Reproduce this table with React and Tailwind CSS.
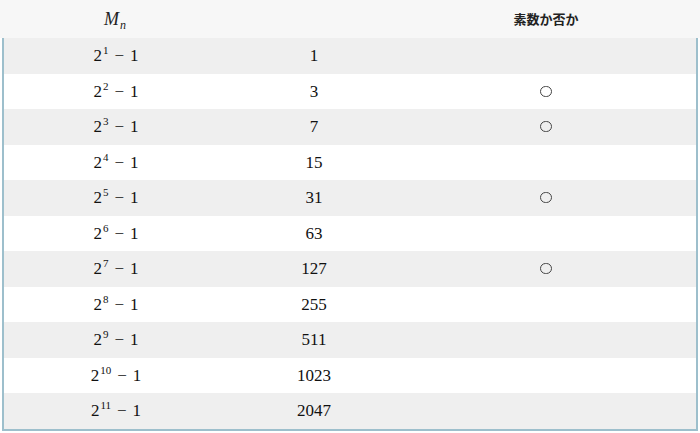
import React from 'react';

const rows = [
  { exp: '1', value: '1', prime: false },
  { exp: '2', value: '3', prime: true },
  { exp: '3', value: '7', prime: true },
  { exp: '4', value: '15', prime: false },
  { exp: '5', value: '31', prime: true },
  { exp: '6', value: '63', prime: false },
  { exp: '7', value: '127', prime: true },
  { exp: '8', value: '255', prime: false },
  { exp: '9', value: '511', prime: false },
  { exp: '10', value: '1023', prime: false },
  { exp: '11', value: '2047', prime: false },
];

const mathFont = { fontFamily: '"Liberation Serif", "DejaVu Serif", serif' };

export default function App() {
  return (
    <div className="w-[700px] h-[433px] bg-white overflow-hidden">
      {/* Header */}
      <div className="flex h-[38px] items-center bg-[#f7f7f7] px-[3px]">
        <div className="w-[224px] text-center text-[18px] text-[#222] italic" style={mathFont}>
          M<span className="text-[12px] relative top-[4px] ml-[1px]">n</span>
        </div>
        <div className="w-[172px]" />
        <div className="flex-1 pr-[4px] text-center text-[13px] font-bold text-[#222] font-['Noto_Sans_CJK_JP',sans-serif]">
          素数か否か
        </div>
      </div>

      {/* Body */}
      <div className="mx-[2px] border-x-[2px] border-b-[2px] border-[#9dbfcc]">
        {rows.map((row, i) => (
          <div
            key={row.exp}
            className={`flex h-[35.5px] items-center ${i % 2 === 0 ? 'bg-[#efefef]' : 'bg-white'}`}
          >
            <div className="w-[224px] text-center text-[17px] text-[#111]" style={mathFont}>
              2<span className="text-[11px] relative -top-[7px] ml-[1px]">{row.exp}</span>
              <span className="mx-[6px]">−</span>1
            </div>
            <div className="w-[172px] text-center text-[17px] text-[#111]" style={mathFont}>
              {row.value}
            </div>
            <div className="flex-1 flex justify-center pr-[4px]">
              {row.prime && (
                <div className="w-[12px] h-[11px] rounded-full border border-[#444]" />
              )}
            </div>
          </div>
        ))}
      </div>
    </div>
  );
}
